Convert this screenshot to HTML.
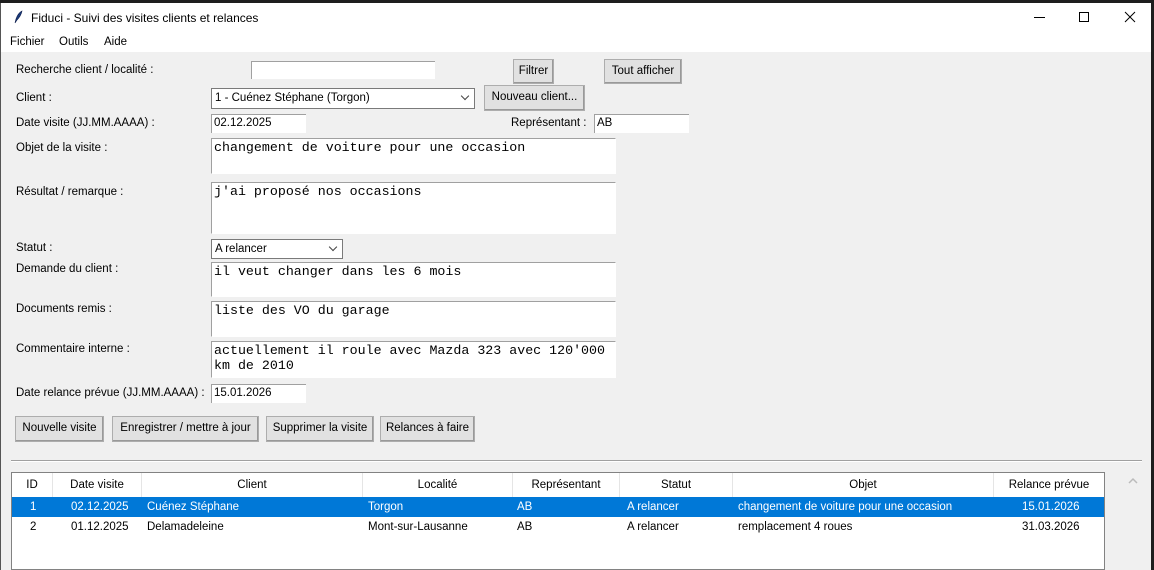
<!DOCTYPE html>
<html><head><meta charset="utf-8"><style>
*{box-sizing:border-box;margin:0;padding:0}
body{width:1154px;height:570px;background:#1e1e1e;position:relative;overflow:hidden;font-family:"Liberation Sans",sans-serif;font-size:11.5px;color:#000}
.a{position:absolute;white-space:nowrap}
.win{position:absolute;left:0;top:3px;width:1151px;height:567px;background:#f0f0f0;border-left:1px solid #555}
.tb{position:absolute;left:0;top:0;width:100%;height:30px;background:#fff}
.mb{position:absolute;left:0;top:30px;width:100%;height:19px;background:#fff}
.en{position:absolute;background:#fff;border-top:1px solid #a0a0a0;border-left:1px solid #a0a0a0;padding:1px 2px;line-height:15px}
.tx{position:absolute;background:#fff;border:1px solid #a0a0a0;border-right-color:#fff;border-bottom-color:#fff;font-family:"Liberation Mono",monospace;font-size:13.3px;line-height:16px;padding:1px 2px;white-space:pre}
.bt{position:absolute;background:#e1e1e1;border:1px solid #adadad;box-shadow:inset -1px -1px #999;text-align:center;line-height:22px}
.cb{position:absolute;background:#fff;border:1px solid #7a7a7a;padding:0 3px;line-height:18px}
.cb:after{content:"";position:absolute;right:6px;top:4px;width:5px;height:5px;border-right:1px solid #444;border-bottom:1px solid #444;transform:rotate(45deg)}
.tv{position:absolute;left:11px;top:472px;width:1094px;height:98px;background:#fff;border:1px solid #828282}
.h{position:absolute;top:0;height:24px;line-height:24px;text-align:center;border-right:1px solid #e5e5e5}
.r{position:absolute;height:20px;line-height:20px}
</style></head><body>
<div class="win">
<div class="tb">
<svg class="a" style="left:11px;top:7px" width="12" height="14" viewBox="0 0 12 14"><path d="M3 13 L4 9 Q6 3 10 1 Q9 6 5 10 Z" fill="#1a3a7a" stroke="#0a1a4a" stroke-width="0.6"/></svg>
<div class="a" style="left:30px;top:8px;font-size:12px">Fiduci - Suivi des visites clients et relances</div>
<div class="a" style="left:1033px;top:14px;width:11px;height:1px;background:#000"></div>
<div class="a" style="left:1078px;top:9px;width:10px;height:10px;border:1px solid #000"></div>
<svg class="a" style="left:1123px;top:8px" width="12" height="12"><path d="M1 1L11 11M11 1L1 11" stroke="#000" stroke-width="1"/></svg>
</div>
<div class="mb">
<div class="a" style="left:9px;top:3px">Fichier</div>
<div class="a" style="left:58px;top:3px">Outils</div>
<div class="a" style="left:103px;top:3px">Aide</div>
</div>
</div>
<div class="a" style="left:16px;top:64px">Recherche client / localité :</div>
<div class="en" style="left:251px;top:61px;width:184px;height:18px"></div>
<div class="bt" style="left:513px;top:59px;width:41px;height:25px">Filtrer</div>
<div class="bt" style="left:604px;top:59px;width:78px;height:25px">Tout afficher</div>
<div class="a" style="left:16px;top:92px">Client :</div>
<div class="cb" style="left:211px;top:88px;width:264px;height:21px">1 - Cuénez Stéphane (Torgon)</div>
<div class="bt" style="left:484px;top:85px;width:101px;height:26px">Nouveau client...</div>
<div class="a" style="left:16px;top:117px">Date visite (JJ.MM.AAAA) :</div>
<div class="en" style="left:211px;top:114px;width:95px;height:19px">02.12.2025</div>
<div class="a" style="left:511px;top:117px">Représentant :</div>
<div class="en" style="left:594px;top:114px;width:95px;height:19px">AB</div>
<div class="a" style="left:16px;top:142px">Objet de la visite :</div>
<div class="tx" style="left:211px;top:138px;width:405px;height:36px">changement de voiture pour une occasion</div>
<div class="a" style="left:16px;top:186px">Résultat / remarque :</div>
<div class="tx" style="left:211px;top:182px;width:405px;height:52px">j'ai proposé nos occasions</div>
<div class="a" style="left:16px;top:242px">Statut :</div>
<div class="cb" style="left:211px;top:239px;width:132px;height:20px">A relancer</div>
<div class="a" style="left:16px;top:263px">Demande du client :</div>
<div class="tx" style="left:211px;top:262px;width:405px;height:35px">il veut changer dans les 6 mois</div>
<div class="a" style="left:16px;top:303px">Documents remis :</div>
<div class="tx" style="left:211px;top:301px;width:405px;height:36px">liste des VO du garage</div>
<div class="a" style="left:16px;top:343px">Commentaire interne :</div>
<div class="tx" style="left:211px;top:341px;width:405px;height:37px;line-height:15px">actuellement il roule avec Mazda 323 avec 120'000
km de 2010</div>
<div class="a" style="left:16px;top:387px">Date relance prévue (JJ.MM.AAAA) :</div>
<div class="en" style="left:211px;top:384px;width:95px;height:19px">15.01.2026</div>
<div class="bt" style="left:15px;top:416px;width:89px;height:26px">Nouvelle visite</div>
<div class="bt" style="left:112px;top:416px;width:147px;height:26px">Enregistrer / mettre à jour</div>
<div class="bt" style="left:266px;top:416px;width:108px;height:26px">Supprimer la visite</div>
<div class="bt" style="left:380px;top:416px;width:95px;height:26px">Relances à faire</div>
<div class="a" style="left:11px;top:460px;width:1131px;height:1px;background:#a0a0a0"></div>
<div class="a" style="left:11px;top:461px;width:1131px;height:1px;background:#fff"></div>
<div class="tv">
<div class="h" style="left:0;width:41px">ID</div>
<div class="h" style="left:41px;width:89px">Date visite</div>
<div class="h" style="left:130px;width:221px">Client</div>
<div class="h" style="left:351px;width:150px">Localité</div>
<div class="h" style="left:501px;width:107px">Représentant</div>
<div class="h" style="left:608px;width:113px">Statut</div>
<div class="h" style="left:721px;width:261px">Objet</div>
<div class="h" style="left:982px;width:110px;border-right:none">Relance prévue</div>
<div class="r" style="left:0;top:24px;width:1092px;background:#0078d7;color:#fff">
<span class="a" style="left:18px">1</span><span class="a" style="left:59px">02.12.2025</span><span class="a" style="left:135px">Cuénez Stéphane</span><span class="a" style="left:356px">Torgon</span><span class="a" style="left:505px">AB</span><span class="a" style="left:615px">A relancer</span><span class="a" style="left:726px">changement de voiture pour une occasion</span><span class="a" style="left:1010px">15.01.2026</span></div>
<div class="r" style="left:0;top:44px;width:1092px">
<span class="a" style="left:18px">2</span><span class="a" style="left:59px">01.12.2025</span><span class="a" style="left:135px">Delamadeleine</span><span class="a" style="left:356px">Mont-sur-Lausanne</span><span class="a" style="left:505px">AB</span><span class="a" style="left:615px">A relancer</span><span class="a" style="left:726px">remplacement 4 roues</span><span class="a" style="left:1010px">31.03.2026</span></div>
</div>
<svg class="a" style="left:1128px;top:477px" width="10" height="8"><path d="M1 6L5 2L9 6" stroke="#bbb" fill="none" stroke-width="1.5"/></svg>
</body></html>
